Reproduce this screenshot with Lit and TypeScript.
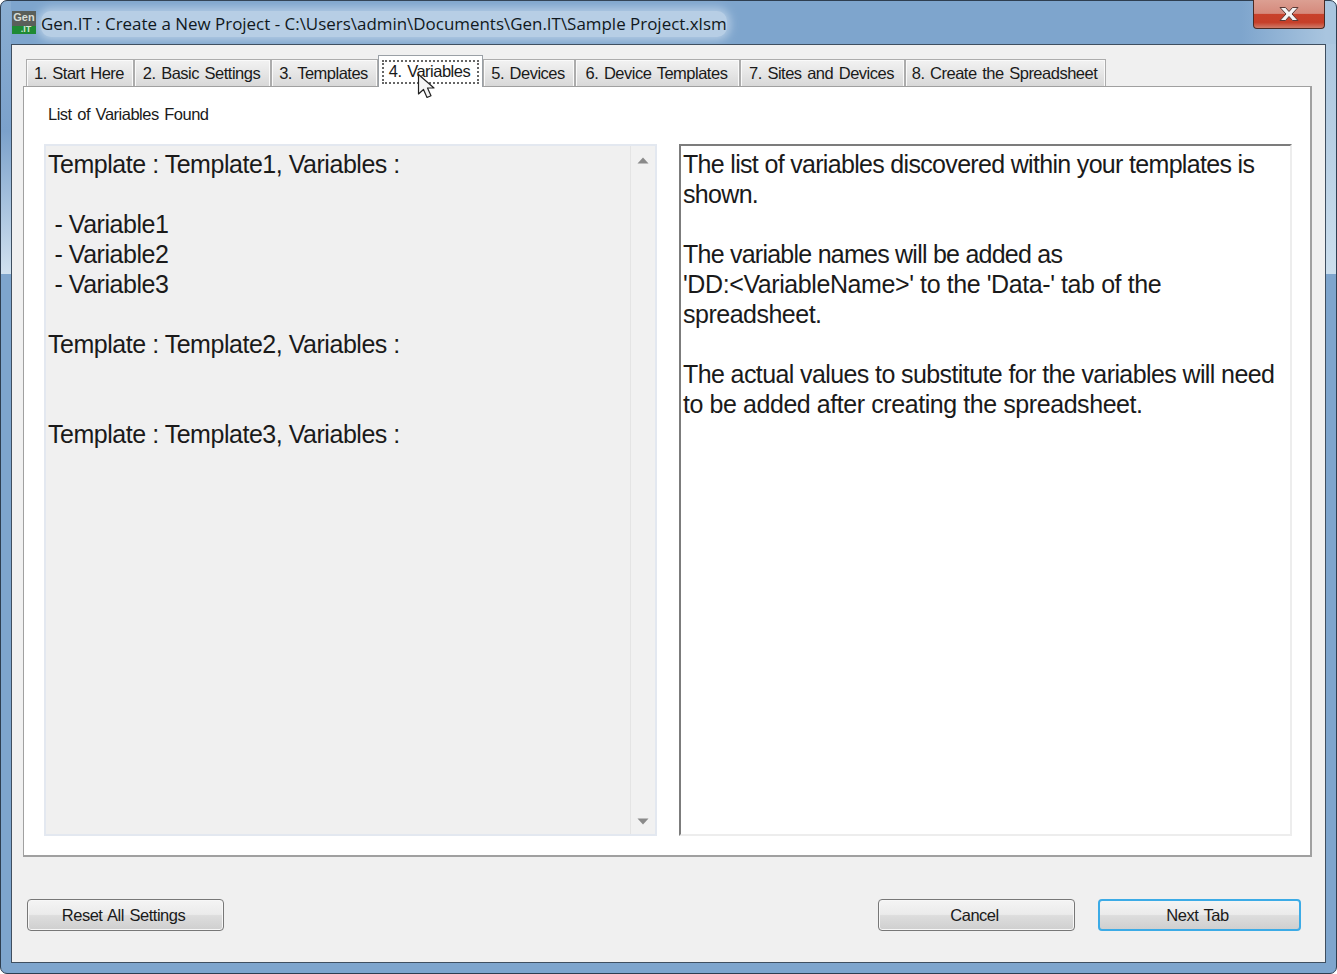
import { LitElement, html, css } from "lit";
import { customElement } from "lit/decorators.js";

const TABS = [
  { label: "1. Start Here", w: 108 },
  { label: "2. Basic Settings", w: 137 },
  { label: "3. Templates", w: 107 },
  { label: "4. Variables", w: 105, active: true },
  { label: "5. Devices", w: 92 },
  { label: "6. Device Templates", w: 165 },
  { label: "7. Sites and Devices", w: 165 },
  { label: "8. Create the Spreadsheet", w: 201 },
];

const LEFT = `Template : Template1, Variables :

 - Variable1
 - Variable2
 - Variable3

Template : Template2, Variables :


Template : Template3, Variables :`;

const RIGHT: [string, number][] = [
  ["The list of variables discovered within your templates is", -0.68],
  ["shown.", -0.68],
  ["", 0],
  ["The variable names will be added as", -0.76],
  ["'DD:<VariableName>' to the 'Data-' tab of the", -0.41],
  ["spreadsheet.", -0.5],
  ["", 0],
  ["The actual values to substitute for the variables will need", -0.6],
  ["to be added after creating the spreadsheet.", -0.43],
];

@customElement("app-root")
export class AppRoot extends LitElement {
  static styles = css`
    :host {
      display: block;
      position: relative;
      width: 1337px;
      height: 974px;
      background: #fff;
      overflow: hidden;
      font-family: "Liberation Sans", Arial, sans-serif;
      color: #1a1a1a;
    }
    .frame {
      box-sizing: border-box;
      width: 1337px;
      height: 974px;
      display: flex;
      flex-direction: column;
      padding: 0 10px 10px 10px;
      border: 1px solid #2e3e50;
      border-radius: 7px;
      background:
        linear-gradient(90deg, transparent 1240px, #a9c5df 1325px) top / 100% 43px no-repeat,
        linear-gradient(#8aaed2 0, #7ba1cb 130px, #d0e1ef 272px) left top / 10px 273px no-repeat,
        linear-gradient(#a9c5df 0, #b6cee3 130px, #cbdeed 272px) right top / 10px 273px no-repeat,
        #7ea5cd;
    }
    .title {
      flex: none;
      height: 43px;
      display: flex;
      align-items: flex-start;
      margin-left: 1px;
    }
    .logo {
      position: relative;
      z-index: 1;
      width: 24px;
      height: 23px;
      margin-top: 10px;
      background: linear-gradient(#5a5f5a 0 65%, #1f8a34 65% 100%);
      display: flex;
      flex-direction: column;
      align-items: center;
      font: bold 11px/13px "Liberation Sans", sans-serif;
      color: #d8ded8;
      flex: none;
    }
    .logo span + span { color: #cfe6d2; font-size: 9px; line-height: 10px; margin-left: 4px; }
    .title-text {
      margin: 10px 0 0 5px;
      height: 26px;
      font: 16.96px/26px "Open Sans", sans-serif;
      color: #101820;
      white-space: nowrap;
      background: #b7cee5;
      border-radius: 10px;
      box-shadow: 0 0 10px 3px #b7cee5;
    }
    .close {
      flex: none;
      width: 72px;
      height: 29px;
      margin: -1px 1px 0 auto;
      box-sizing: border-box;
      border: 1px solid #4a2a24;
      border-top: none;
      border-radius: 0 0 4px 4px;
      background: linear-gradient(#dc9f92 0%, #d58a7c 48%, #c8412b 50%, #c63f29 80%, #cf7b69 100%);
      display: flex;
      align-items: center;
      justify-content: center;
    }
    .client {
      flex: 1;
      min-height: 0;
      display: flex;
      flex-direction: column;
      background: #f0f0f0;
      border: 1px solid #3f4f60;
    }
    .tabs {
      flex: none;
      height: 32px;
      margin: 10px 0 -1px 14px;
      display: flex;
      align-items: flex-end;
      position: relative;
      z-index: 1;
    }
    .tab {
      box-sizing: border-box;
      height: 27px;
      margin-bottom: 1px;
      padding-right: 2px;
      border: 1px solid #acacac;
      border-bottom: none;
      background: linear-gradient(#f2f2f2, #e6e6e6 50%, #d8d8d8);
      box-shadow: inset 1px 1px 0 #fafafa, inset -1px 0 0 #fafafa;
      font-size: 16.5px;
      line-height: 26px;
      text-align: center;
      white-space: nowrap;
      letter-spacing: -0.5px;
      word-spacing: 1.5px;
    }
    .tab.active {
      height: 32px;
      margin-bottom: 0;
      background: #fff;
      box-shadow: none;
      padding: 4px 3px 0;
      border-color: #9aa0a6;
    }
    .focus {
      height: 24px;
      line-height: 19px;
      padding-right: 2px;
      border: 2px dotted #666;
      box-sizing: border-box;
    }
    .panel {
      box-sizing: border-box;
      height: 771px;
      margin: 0 13px 0 11px;
      border: 2px solid #a0a0a0;
      border-width: 1px 2px 2px 1px;
      background: #fff;
      padding: 17px 18px 19px 20px;
      display: flex;
      flex-direction: column;
    }
    .caption {
      margin-left: 4px;
      font-size: 16.5px;
      line-height: 20px;
      letter-spacing: -0.5px;
      word-spacing: 1.5px;
      height: 40px;
      flex: none;
    }
    .body {
      flex: 1;
      min-height: 0;
      display: grid;
      grid-template-columns: 613px 613px;
      gap: 22px;
    }
    .box {
      box-sizing: border-box;
      font-size: 25px;
      line-height: 30px;
    }
    .list {
      display: flex;
      background: #f0f0f0;
      border: 2px solid #e3e8f0;
    }
    .list .txt {
      flex: 1;
      padding: 3px 2px;
      white-space: pre;
      letter-spacing: -0.47px;
    }
    .scroll {
      width: 25px;
      flex: none;
      background: #f1f1f1;
      border-left: 1px solid #e4e4e4;
      box-sizing: border-box;
      display: flex;
      flex-direction: column;
      justify-content: space-between;
      align-items: center;
      padding: 11px 0 9px;
    }
    .note {
      background: #fff;
      border: 2px solid #ededed;
      border-top-color: #7c7c7c;
      border-left-color: #7c7c7c;
      padding: 3px 2px;
    }
    .line { height: 30px; white-space: pre; }
    .footer {
      flex: 1;
      display: flex;
      align-items: flex-start;
      padding: 42px 24px 0 15px;
    }
    button {
      box-sizing: border-box;
      width: 197px;
      height: 32px;
      border: 1px solid #777;
      border-radius: 4px;
      background: linear-gradient(#f4f4f4, #ebebeb 48%, #dddddd 52%, #cfcfcf);
      font: 16.5px "Liberation Sans", sans-serif;
      color: #1a1a1a;
      letter-spacing: -0.5px;
      word-spacing: 1.5px;
      padding: 0 4px 0 0;
      box-shadow: inset 0 0 0 1px #f7f7f7;
    }
    .spacer { flex: 1; }
    .next {
      width: 203px;
      margin-left: 23px;
      border: 2px solid #3cabe6;
      border-radius: 4px;
      box-shadow: none;
    }
    .cursor {
      position: absolute;
      left: 417px;
      top: 73px;
      z-index: 2;
    }
  `;

  render() {
    return html`
      <div class="frame">
        <div class="title">
          <div class="logo"><span>Gen</span><span>.IT</span></div>
          <div class="title-text">Gen.IT : Create a New Project - C:\\Users\\admin\\Documents\\Gen.IT\\Sample Project.xlsm</div>
          <div class="close">
            <svg width="22" height="16" viewBox="0 0 22 16">
              <path d="M2 1.5h5.5L11 5.5l3.5-4H20L14 8l6 6.5h-5.5L11 10.5l-3.5 4H2L8 8z" fill="#f4f4f4" stroke="#5c3a36" stroke-width="1"/>
            </svg>
          </div>
        </div>
        <div class="client">
          <div class="tabs">
            ${TABS.map(
              (t) => html`<div class="tab ${t.active ? "active" : ""}" style="width:${t.w}px">
                ${t.active ? html`<div class="focus">${t.label}</div>` : t.label}
              </div>`
            )}
          </div>
          <div class="panel">
            <div class="caption">List of Variables Found</div>
            <div class="body">
              <div class="box list">
                <div class="txt">${LEFT}</div>
                <div class="scroll">
                  <svg width="12" height="7" viewBox="0 0 12 7"><path d="M6 0.5L11.5 6.5H0.5z" fill="#8a8a8a"/></svg>
                  <svg width="12" height="7" viewBox="0 0 12 7"><path d="M0.5 0.5H11.5L6 6.5z" fill="#8a8a8a"/></svg>
                </div>
              </div>
              <div class="box note">
                ${RIGHT.map(([t, ls]) => html`<div class="line" style="letter-spacing:${ls}px">${t}</div>`)}
              </div>
            </div>
          </div>
          <div class="footer">
            <button>Reset All Settings</button>
            <div class="spacer"></div>
            <button>Cancel</button>
            <button class="next">Next Tab</button>
          </div>
        </div>
      </div>
      <svg class="cursor" width="22" height="27" viewBox="0 0 22 27">
        <path d="M1.5 1.5V21l5-4.5 3.5 8 4-1.8-3.5-7.7H17z" fill="#f4f4f4" stroke="#222" stroke-width="1.2" stroke-linejoin="round"/>
      </svg>
    `;
  }
}
